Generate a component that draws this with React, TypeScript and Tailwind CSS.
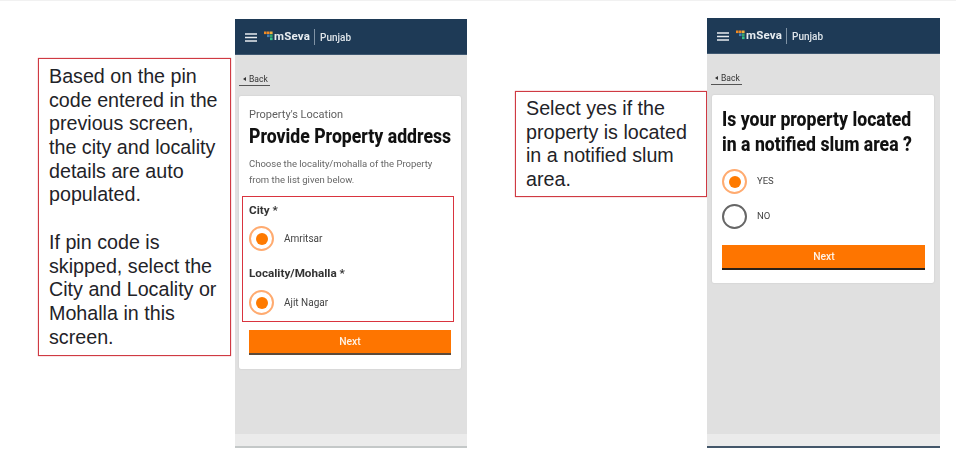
import React from "react";

const roboto = "font-['Roboto',sans-serif]";

function Header() {
  return (
    <div className="h-[36px] shrink-0 bg-[#1e3a56] flex items-center pl-[10px] pt-[1px] border-b border-[#3f5871]">
      <svg width="12" height="9" viewBox="0 0 12 9" className="shrink-0">
        <path d="M0 1h12M0 4.5h12M0 8h12" stroke="#e8ecef" strokeWidth="1.3" />
      </svg>
      <svg width="10" height="10" viewBox="0 0 10 10" className="ml-[7px] mb-[2px] shrink-0">
        <rect x="0" y="0.5" width="2.6" height="2.6" fill="#f08a24" />
        <rect x="3" y="0.5" width="2.6" height="2.6" fill="#f08a24" />
        <rect x="6" y="0.5" width="2.6" height="2.6" fill="#f0b040" />
        <rect x="3" y="3.5" width="2.6" height="2.6" fill="#3f7fb8" />
        <rect x="6" y="3.5" width="2.6" height="2.6" fill="#36a66c" />
        <rect x="6" y="6.5" width="2.6" height="2.6" fill="#36c08a" />
      </svg>
      <span className={`${roboto} text-[11.5px] font-bold text-[#e8edf1] tracking-[0.2px]`}>mSeva</span>
      <span className="w-px h-[16px] bg-[#8093a5] ml-[4px]" />
      <span className={`${roboto} text-[10px] font-medium text-[#dfe5ea] ml-[5px]`}>Punjab</span>
    </div>
  );
}

function Back() {
  return (
    <div className="pl-[4px] pt-[17px] h-[41px] shrink-0">
      <div className={`${roboto} w-[31px] h-[14px] border-b border-[#555] text-[9.5px] leading-[12px] text-[#333] flex items-center gap-[3px] pl-[4px]`}>
        <span className="w-0 h-0 border-y-[2px] border-y-transparent border-r-[3px] border-r-[#333] shrink-0" />
        <span className="scale-x-90 origin-left">Back</span>
      </div>
    </div>
  );
}

function Radio({ on = true }: { on?: boolean }) {
  return on ? (
    <span className="w-[25px] h-[25px] rounded-full border-2 border-[#ffab70] bg-white flex items-center justify-center shrink-0">
      <span className="w-[12px] h-[12px] rounded-full bg-[#fe7a00]" />
    </span>
  ) : (
    <span className="w-[25px] h-[25px] rounded-full border-2 border-[#666] bg-white shrink-0" />
  );
}

function NextButton({ line }: { line: string }) {
  return (
    <div className={`h-[25px] bg-[#fe7500] border-b-2 ${line} flex items-center justify-center ${roboto} text-[11.5px] font-medium text-[#fff3e6]`}>
      <span className="scale-x-90">Next</span>
    </div>
  );
}

function Footer({ line }: { line: string }) {
  return <div className={`h-[14px] shrink-0 bg-[#ebebeb] border-b-2 ${line}`} />;
}

function Callout({ lines, className }: { lines: string[]; className: string }) {
  return (
    <div className={`border border-[#cf3a43] shadow-[0_0_1px_#e0636b] bg-white shrink-0 pl-[10px] font-['Liberation_Sans',sans-serif] text-[19.7px] leading-[23.7px] text-[#1f2328] ${className}`}>
      {lines.map((l, i) => (
        <div key={i} className="whitespace-nowrap h-[23.7px]">{l || "\u00a0"}</div>
      ))}
    </div>
  );
}

export default function App() {
  return (
    <div className="w-[956px] h-[470px] bg-white overflow-hidden flex items-start border-t border-[#f1f1f1]">
      <Callout
        className="ml-[38px] mt-[57px] w-[193px] h-[298px] pt-[6px]"
        lines={[
          "Based on the pin",
          "code entered in the",
          "previous screen,",
          "the city and locality",
          "details are auto",
          "populated.",
          "",
          "If pin code is",
          "skipped, select the",
          "City and Locality or",
          "Mohalla in this",
          "screen.",
        ]}
      />

      <div className="ml-[4px] mt-[18px] w-[232px] h-[429px] flex flex-col bg-[#e0e0e0] shrink-0 blur-[0.4px]">
        <Header />
        <Back />
        <div className="ml-[4px] w-[222px] h-[273px] bg-white rounded-[2px] shadow-[0_0_2px_rgba(0,0,0,0.12)] pt-[12px] flex flex-col shrink-0">
          <div className={`${roboto} pl-[10px] text-[11px] leading-[13px] text-[#5f5f5f]`}>Property's Location</div>
          <div className={`${roboto} ml-[10px] mt-[3px] text-[21px] leading-[24px] font-extrabold text-[#111] whitespace-nowrap scale-x-[0.84] origin-left`}>
            Provide Property address
          </div>
          <div className={`${roboto} pl-[10px] mt-[8px] text-[9.5px] leading-[15.5px] text-[#666] whitespace-nowrap`}>
            Choose the locality/mohalla of the Property
            <br />
            from the list given below.
          </div>
          <div className="mt-[9px] ml-[3px] w-[212px] h-[126px] border border-[#d9343f] pl-[6px] pt-[6px] shrink-0">
            <div className={`${roboto} text-[11.7px] leading-[14px] font-bold text-[#333]`}>City *</div>
            <div className="flex items-center mt-[9px]">
              <Radio />
              <span className={`${roboto} ml-[10px] text-[10px] text-[#444]`}>Amritsar</span>
            </div>
            <div className={`${roboto} mt-[15px] text-[11.7px] leading-[14px] font-bold text-[#333]`}>Locality/Mohalla *</div>
            <div className="flex items-center mt-[10px]">
              <Radio />
              <span className={`${roboto} ml-[10px] text-[10px] text-[#444]`}>Ajit Nagar</span>
            </div>
          </div>
          <div className="mt-[8px] mx-[10px] w-[202px]">
            <NextButton line="border-[#5c4a3a]" />
          </div>
        </div>
        <div className="flex-1" />
        <Footer line="border-[#c4c8c8]" />
      </div>

      <Callout
        className="ml-[48px] mt-[90px] w-[192px] h-[106px] pt-[5px]"
        lines={["Select yes if the", "property is located", "in a notified slum", "area."]}
      />

      <div className="mt-[17px] w-[233px] h-[430px] flex flex-col bg-[#e0e0e0] shrink-0 blur-[0.4px]">
        <Header />
        <Back />
        <div className="ml-[5px] w-[222px] h-[188px] bg-white rounded-[2px] shadow-[0_0_2px_rgba(0,0,0,0.12)] flex flex-col shrink-0 pt-[12px]">
          <div className={`${roboto} ml-[10px] text-[21px] leading-[24.5px] font-extrabold text-[#111] whitespace-nowrap scale-x-[0.84] origin-left`}>
            Is your property located
            <br />
            in a notified slum area ?
          </div>
          <div className="pl-[10px] mt-[13px] flex items-center">
            <Radio />
            <span className={`${roboto} ml-[10px] text-[9.5px] text-[#444]`}>YES</span>
          </div>
          <div className="pl-[10px] mt-[10px] flex items-center">
            <Radio on={false} />
            <span className={`${roboto} ml-[10px] text-[9.5px] text-[#444]`}>NO</span>
          </div>
          <div className="mt-[16px] ml-[10px] w-[203px]">
            <NextButton line="border-[#2a2118]" />
          </div>
        </div>
        <div className="flex-1" />
        <Footer line="border-[#44576a]" />
      </div>
    </div>
  );
}
